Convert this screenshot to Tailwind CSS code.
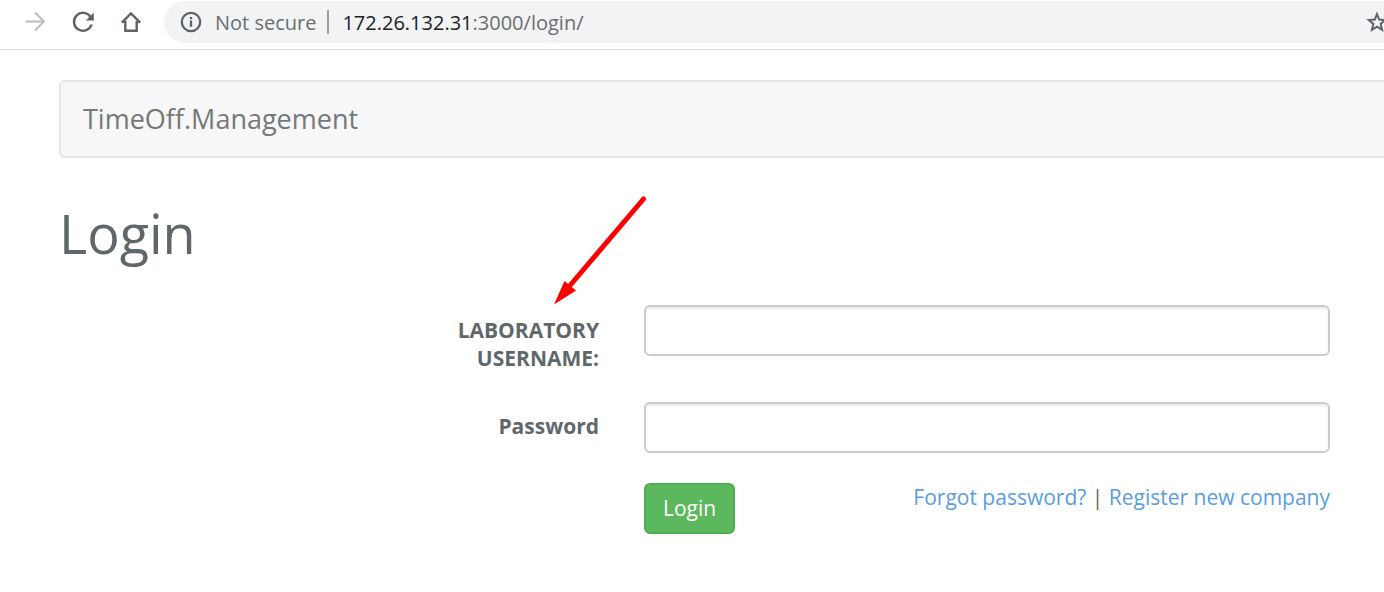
<!DOCTYPE html>
<html lang="en">
<head>
<meta charset="utf-8">
<meta name="viewport" content="width=device-width, initial-scale=1">
<title>TimeOff.Management</title>
<script src="https://cdn.jsdelivr.net/npm/@tailwindcss/browser@4"></script>
</head>
<body class="overflow-x-hidden bg-white font-['Open_Sans',sans-serif] text-[21px] leading-7 text-[#5f676b]">
<header class="flex h-[50px] items-start border-b border-[#d9dadb] pt-px">
  <div class="flex h-[42px] shrink-0 items-center gap-6 pl-[23px] text-[#5f6368]">
    <button type="button" aria-label="Forward" class="text-[#bbbcbe]">
      <svg class="size-6" viewBox="0 0 24 24" fill="none" stroke="currentColor" stroke-width="2"><path d="M2.500 11.500H21M12 2.500l9 9-9 9"/></svg>
    </button>
    <button type="button" aria-label="Reload">
      <svg class="size-6" viewBox="0 0 24 24" fill="none" stroke="currentColor" stroke-width="2.400"><path d="M19.600 7A9 9 0 1 0 20.600 14.500"/><path d="M22.800 2.500v8h-8z" fill="currentColor" stroke="none"/></svg>
    </button>
    <button type="button" aria-label="Home">
      <svg class="size-6" viewBox="0 0 24 24" fill="none" stroke="currentColor" stroke-width="2.400"><path d="M4.300 11.900h2v8.900h11.400v-8.900h2" /><path d="M2.800 12.600L12 3.400l9.200 9.200"/></svg>
    </button>
  </div>
  <div class="ml-[21px] flex h-[42px] min-w-0 flex-1 items-center rounded-l-full bg-[#f1f3f4] pl-4 text-[20px] text-[#6b6d70]">
    <svg class="size-[22px] shrink-0" viewBox="0 0 22 22" fill="none" stroke="#5f6368" stroke-width="2.300"><circle cx="11" cy="11" r="9.200"/><path d="M11 9.500v6.300M11 6v2.200"/></svg>
    <span class="ml-[13px] pt-px whitespace-nowrap">Not secure</span>
    <span class="ml-[11px] h-6 w-0.5 bg-[#9b9da0]"></span>
    <span class="ml-[13px] flex-1 pt-px whitespace-nowrap"><span class="text-[#202124]">172.26.132.31</span>:3000/login/</span>
    <button type="button" aria-label="Bookmark this page" class="-mr-1 shrink-0">
      <svg class="size-[22px]" viewBox="0 0 22 22" fill="none" stroke="#5f6368" stroke-width="2"><path d="M11 3l2.200 5.600 6 .4-4.600 3.900 1.500 5.900L11 15.600l-5.100 3.200 1.500-5.900L2.800 9l6-.4z"/></svg>
    </button>
  </div>
</header>
<main class="pt-[30px] pl-[59px]">
  <nav class="-mr-2 flex h-[78px] items-center rounded-md border-2 border-[#e1e7e9] bg-[#f5f7f9] pl-[22px]">
    <a href="#" class="text-[27px] leading-8 text-[#777777]">TimeOff.Management</a>
  </nav>
  <h1 class="mt-11 text-[54px] leading-[62px]">Login</h1>
  <form class="mt-[41px] grid grid-cols-[540fr_686fr] gap-x-[45px] pr-[54px]">
    <label for="username" class="mt-[11px] ml-auto w-[150px] text-right font-bold">LABORATORY USERNAME:</label>
    <input id="username" type="text" class="h-[51px] rounded-md border-2 border-[#cccccc] px-4 shadow-[inset_0_2px_2px_rgba(0,0,0,0.075)]">
    <label for="password" class="mt-10 text-right font-bold">Password</label>
    <input id="password" type="password" class="mt-[30px] h-[51px] rounded-md border-2 border-[#cccccc] px-4 shadow-[inset_0_2px_2px_rgba(0,0,0,0.075)]">
    <div class="col-start-2 mt-[30px] flex items-start justify-between">
      <button type="submit" class="h-[51px] rounded-md border-2 border-[#4cae4c] bg-[#5cb85c] px-[17px] pb-px text-white">Login</button>
      <p class="whitespace-nowrap"><a href="#" class="text-[#5a9ddf]">Forgot password?</a> | <a href="#" class="text-[#5a9ddf]">Register new company</a></p>
    </div>
  </form>
</main>
<svg class="pointer-events-none absolute top-[190px] left-[550px] h-[120px] w-[100px]" viewBox="0 0 100 120" aria-hidden="true"><path d="M93.500 9L17 99" stroke="#ff0000" stroke-width="5" stroke-linecap="round"/><path d="M4 114.500L14.500 91l11.500 9.500z" fill="#ff0000"/></svg>
</body>
</html>
